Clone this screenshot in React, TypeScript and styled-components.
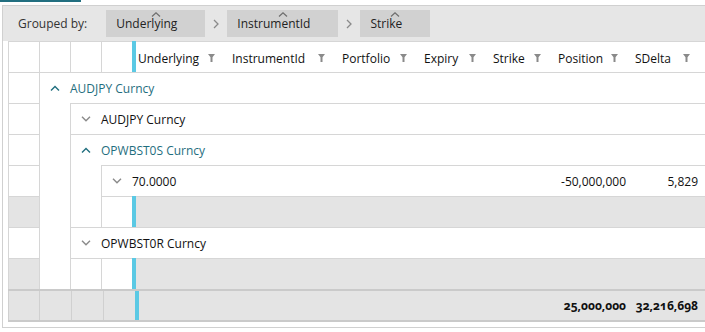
import React from "react";
import styled, { createGlobalStyle } from "styled-components";

const GlobalStyle = createGlobalStyle`
  *, *::before, *::after { box-sizing: border-box; }
  html, body { margin: 0; padding: 0; background: #fff; overflow: hidden; }
  body {
    font-family: "Open Sans", "Liberation Sans", sans-serif;
    font-size: 12px;
    color: #111;
  }
`;

const LINE = "#d6d6d6";
const GRAY = "#e4e4e4";
const TEAL = "#1f6e7e";
const BAR = "#5bc9e4";

const Page = styled.div`
  width: 705px;
`;

const TabStrip = styled.div`
  height: 5px;
`;

const TabUnderline = styled.div`
  width: 81px;
  height: 2px;
  background: #226f80;
`;

const Frame = styled.div`
  margin-left: 2px;
  border: 1px solid #d0d0d0;
  border-right: none;
  padding-bottom: 5px;
`;

const GroupPanel = styled.div`
  height: 35px;
  display: flex;
  align-items: center;
  padding-left: 15px;
  background: #e6e6e6;
`;

const GroupedBy = styled.span`
  color: #333;
  margin-right: 19px;
`;

const Chip = styled.div`
  display: grid;
  height: 27px;
  background: #d1d1d1;
  color: #222;
`;

const ChipText = styled.span`
  grid-area: 1 / 1;
  align-self: center;
  justify-self: start;
  margin: 0 28px 0 10px;
`;

const ChipCaret = styled.svg`
  grid-area: 1 / 1;
  align-self: start;
  justify-self: center;
  margin-top: 2px;
`;

const ChipSep = styled.svg`
  margin: 0 8px;
`;

const Body = styled.div`
  margin-left: 5px;
  display: grid;
  grid-template-columns: repeat(4, 31px) 4px 1fr;
  grid-template-rows: repeat(8, 31px);
`;

const Cell = styled.div<{ $col: string; $row: string; $gray?: boolean; $noTop?: boolean }>`
  grid-column: ${(p) => p.$col};
  grid-row: ${(p) => p.$row};
  border-left: 1px solid ${LINE};
  border-top: ${(p) => (p.$noTop ? "none" : `1px solid ${LINE}`)};
  background: ${(p) => (p.$gray ? GRAY : "#fff")};
`;

const Bar = styled.div<{ $row: number }>`
  grid-column: 5;
  grid-row: ${(p) => p.$row};
  background: ${BAR};
`;

const HeaderRow = styled.div`
  grid-column: 6;
  grid-row: 1;
  display: grid;
  grid-template-columns: 90px 110px 82px 69px 65px 77px 72px 1fr;
  border-top: 1px solid ${LINE};
`;

const HeaderCell = styled.div<{ $first?: boolean }>`
  display: flex;
  align-items: center;
  padding-top: 2px;
  padding-left: ${(p) => (p.$first ? 2 : 6)}px;
  padding-right: 11px;
  color: #111;
`;

const Funnel = styled.svg`
  margin-left: auto;
`;

const GrayRow = styled.div<{ $row: number }>`
  grid-column: 6;
  grid-row: ${(p) => p.$row};
  border-top: 1px solid ${LINE};
  background: ${GRAY};
`;

const GroupRow = styled.div<{ $col: string; $row: number; $open?: boolean }>`
  grid-column: ${(p) => p.$col};
  grid-row: ${(p) => p.$row};
  display: grid;
  grid-template-columns: 1fr 77px 72px 4px;
  align-items: center;
  border-top: 1px solid ${LINE};
  border-left: 1px solid ${LINE};
  background: #fff;
  color: ${(p) => (p.$open ? TEAL : "#111")};
`;

const GroupTitle = styled.div`
  display: flex;
  align-items: center;
  gap: 10px;
  padding-left: 10px;
`;

const Value = styled.div<{ $bold?: boolean }>`
  text-align: right;
  padding-right: 3px;
  font-weight: ${(p) => (p.$bold ? 700 : 400)};
  font-variant-numeric: ${(p) => (p.$bold ? "oldstyle-nums" : "normal")};
`;

const Footer = styled.div`
  margin-left: 5px;
  height: 33px;
  display: flex;
  border-top: 2px solid #cacaca;
  border-bottom: 2px solid #cacaca;
  background: ${GRAY};
`;

const FooterIndent = styled.div<{ $w: number }>`
  width: ${(p) => p.$w}px;
  border-left: 1px solid #d0d0d0;
`;

const FooterBar = styled.div`
  width: 4px;
  background: ${BAR};
`;

const FooterValues = styled.div`
  flex: 1;
  display: grid;
  grid-template-columns: 1fr 77px 72px 4px;
  align-items: center;
  color: #111;
`;

const Chevron = ({ open }: { open?: boolean }) => (
  <svg width="10" height="6" viewBox="0 0 10 6">
    <polyline
      points={open ? "1,5.5 5,1.5 9,5.5" : "1,0.8 5,4.8 9,0.8"}
      fill="none"
      stroke={open ? TEAL : "#8a8a8a"}
      strokeWidth="1.4"
    />
  </svg>
);

const FilterIcon = () => (
  <Funnel width="7" height="8" viewBox="0 0 7 8">
    <path d="M0 0H7L4.5 3.2V8H2.5V3.2Z" fill="#8a8a8a" />
  </Funnel>
);

const groups = ["Underlying", "InstrumentId", "Strike"];
const columns = ["Underlying", "InstrumentId", "Portfolio", "Expiry", "Strike", "Position", "SDelta"];

export default function App() {
  return (
    <Page>
      <GlobalStyle />
      <TabStrip>
        <TabUnderline />
      </TabStrip>
      <Frame>
        <GroupPanel>
          <GroupedBy>Grouped by:</GroupedBy>
          {groups.map((g, i) => (
            <React.Fragment key={g}>
              {i > 0 && (
                <ChipSep width="6" height="10" viewBox="0 0 6 10">
                  <polyline points="1,1 5,5 1,9" fill="none" stroke="#8a8a8a" strokeWidth="1.3" />
                </ChipSep>
              )}
              <Chip>
                <ChipCaret width="10" height="5" viewBox="0 0 10 5">
                  <polyline points="1,4.5 5,0.8 9,4.5" fill="none" stroke="#6e6e6e" strokeWidth="1.2" />
                </ChipCaret>
                <ChipText>{g}</ChipText>
              </Chip>
            </React.Fragment>
          ))}
        </GroupPanel>

        <Body>
          {/* header */}
          {["1", "2", "3", "4"].map((c) => (
            <Cell key={c} $col={c} $row="1" />
          ))}
          <Bar $row={1} />
          <HeaderRow>
            {columns.map((c, i) => (
              <HeaderCell key={c} $first={i === 0}>
                {c}
                <FilterIcon />
              </HeaderCell>
            ))}
            <div />
          </HeaderRow>

          {/* row indicator column */}
          {[2, 3, 4, 5, 6, 7, 8].map((r) => (
            <Cell key={r} $col="1" $row={String(r)} $gray={r === 6 || r === 8} />
          ))}

          <GroupRow $col="2 / -1" $row={2} $open>
            <GroupTitle>
              <Chevron open />
              AUDJPY Curncy
            </GroupTitle>
          </GroupRow>
          <Cell $col="2" $row="3 / 9" $noTop />

          <GroupRow $col="3 / -1" $row={3}>
            <GroupTitle>
              <Chevron />
              AUDJPY Curncy
            </GroupTitle>
          </GroupRow>

          <GroupRow $col="3 / -1" $row={4} $open>
            <GroupTitle>
              <Chevron open />
              OPWBST0S Curncy
            </GroupTitle>
          </GroupRow>
          <Cell $col="3" $row="5 / 7" $noTop />

          <GroupRow $col="4 / -1" $row={5}>
            <GroupTitle>
              <Chevron />
              70.0000
            </GroupTitle>
            <Value>-50,000,000</Value>
            <Value>5,829</Value>
            <div />
          </GroupRow>

          <Cell $col="4" $row="6" />
          <Bar $row={6} />
          <GrayRow $row={6} />

          <GroupRow $col="3 / -1" $row={7}>
            <GroupTitle>
              <Chevron />
              OPWBST0R Curncy
            </GroupTitle>
          </GroupRow>

          <Cell $col="3" $row="8" />
          <Cell $col="4" $row="8" />
          <Bar $row={8} />
          <GrayRow $row={8} />
        </Body>

        <Footer>
          <FooterIndent $w={31} />
          <FooterIndent $w={32} />
          <FooterIndent $w={32} />
          <FooterIndent $w={32} />
          <FooterBar />
          <FooterValues>
            <div />
            <Value $bold>25,000,000</Value>
            <Value $bold>32,216,698</Value>
            <div />
          </FooterValues>
        </Footer>
      </Frame>
    </Page>
  );
}
